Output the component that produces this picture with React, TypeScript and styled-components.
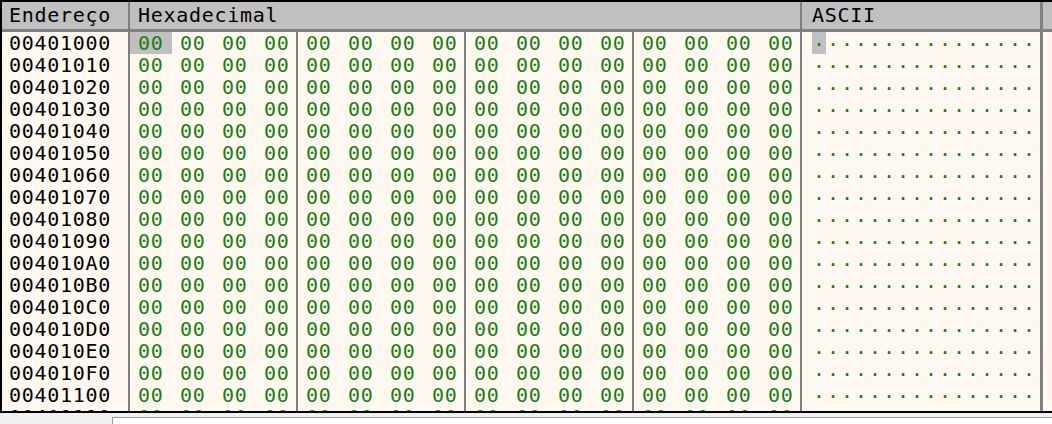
import React from "react";
import styled, { createGlobalStyle } from "styled-components";

const GlobalStyle = createGlobalStyle`
  html, body {
    margin: 0;
    padding: 0;
    background: #f0f0f0;
  }
  * { box-sizing: border-box; }
`;

const MONO = `"DejaVu Sans Mono", "Liberation Mono", monospace`;
const SEP = "#808080";
const GREEN = "#1c7d14";

const Frame = styled.div`
  width: 1052px;
  height: 424px;
  display: flex;
  flex-direction: column;
  overflow: hidden;
  font-family: ${MONO};
  font-size: 20px;
  letter-spacing: 0.7px;
`;

const View = styled.div`
  display: flex;
  flex-direction: column;
  border-top: 2px solid #000;
  border-left: 2px solid #000;
  border-bottom: 2px solid #000;
  height: 413px;
  flex: 0 0 413px;
`;

const Header = styled.div`
  display: flex;
  height: 30px;
  background: #c0c0c0;
  border-bottom: 3px solid ${SEP};
  flex: 0 0 auto;
`;

const HeaderCell = styled.div<{ $w?: number; $sep?: number; $pad?: number }>`
  ${(p) => (p.$w ? `width: ${p.$w}px; flex: 0 0 ${p.$w}px;` : "flex: 1;")}
  border-right: ${(p) => p.$sep ?? 0}px solid ${SEP};
  padding-left: ${(p) => p.$pad ?? 8}px;
  line-height: 27px;
  color: #000;
  white-space: nowrap;
`;

const Body = styled.div`
  flex: 1;
  overflow: hidden;
  background: #fff8f0;
`;

const Row = styled.div`
  display: flex;
  height: 22px;
`;

const AddrCell = styled.div`
  width: 128px;
  flex: 0 0 128px;
  border-right: 2px solid ${SEP};
  padding-left: 7px;
  line-height: 22px;
  color: #000;
`;

const Group = styled.div`
  width: 168px;
  flex: 0 0 168px;
  display: grid;
  grid-template-columns: 42px 42px 42px 1fr;
  border-right: 2px solid ${SEP};
`;

const Byte = styled.div<{ $sel?: boolean }>`
  padding-left: 8px;
  line-height: 22px;
  color: ${GREEN};
  background: ${(p) => (p.$sel ? "#c0c0c0" : "transparent")};
  white-space: nowrap;
`;

const AsciiCell = styled.div`
  width: 241px;
  flex: 0 0 241px;
  display: flex;
  padding-left: 10px;
  border-right: 3px solid ${SEP};
`;

const Char = styled.div<{ $sel?: boolean }>`
  width: 14px;
  flex: 0 0 14px;
  text-align: center;
  font-size: 15px;
  font-weight: bold;
  line-height: 18px;
  letter-spacing: 0;
  color: ${GREEN};
  background: ${(p) => (p.$sel ? "#c0c0c0" : "transparent")};
`;

const Filler = styled.div`
  flex: 1;
`;

const Footer = styled.div`
  flex: 1;
  display: flex;
  background: #f0f0f0;
  padding-top: 4px;
  padding-left: 112px;
`;

const InputBox = styled.div`
  flex: 1;
  background: #ffffff;
  border-top: 1px solid #9a9a9a;
  border-left: 1px solid #9a9a9a;
`;

const ROWS = 18;
const BASE = 0x401000;

export default function App() {
  const rows = Array.from({ length: ROWS }, (_, i) => i);
  return (
    <>
      <GlobalStyle />
      <Frame>
        <View>
          <Header>
            <HeaderCell $w={128} $sep={2} $pad={7}>Endereço</HeaderCell>
            <HeaderCell $w={672} $sep={2}>Hexadecimal</HeaderCell>
            <HeaderCell $w={241} $sep={3} $pad={10}>ASCII</HeaderCell>
            <HeaderCell />
          </Header>
          <Body>
            {rows.map((r) => (
              <Row key={r}>
                <AddrCell>
                  {(BASE + r * 16).toString(16).toUpperCase().padStart(8, "0")}
                </AddrCell>
                {[0, 1, 2, 3].map((g) => (
                  <Group key={g}>
                    {[0, 1, 2, 3].map((b) => (
                      <Byte key={b} $sel={r === 0 && g === 0 && b === 0}>
                        00
                      </Byte>
                    ))}
                  </Group>
                ))}
                <AsciiCell>
                  {Array.from({ length: 16 }, (_, c) => (
                    <Char key={c} $sel={r === 0 && c === 0}>
                      .
                    </Char>
                  ))}
                </AsciiCell>
                <Filler />
              </Row>
            ))}
          </Body>
        </View>
        <Footer>
          <InputBox />
        </Footer>
      </Frame>
    </>
  );
}
